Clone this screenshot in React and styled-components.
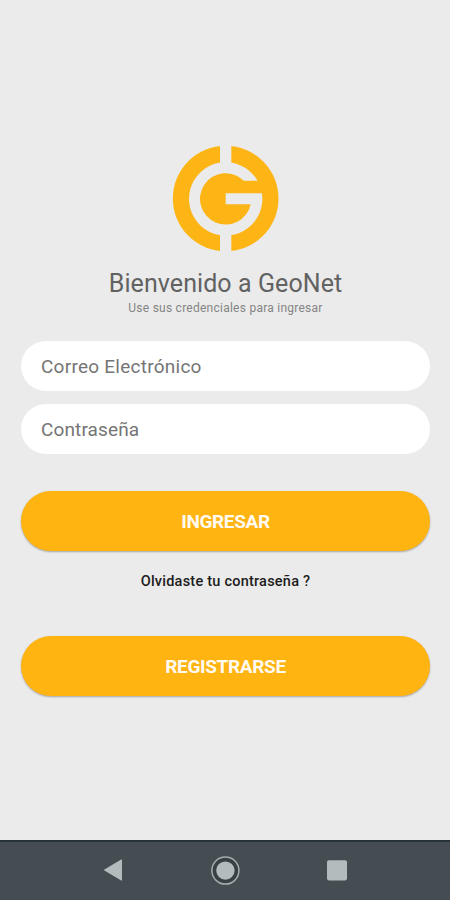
import React from 'react'
import styled, { createGlobalStyle } from 'styled-components'

export default function App() {
  return (
    <Screen>
      <GlobalStyle />
      <Content>
        <Logo />
        <Title>Bienvenido a GeoNet</Title>
        <SubTitle>Use sus credenciales para ingresar</SubTitle>
        <Form onSubmit={(e) => e.preventDefault()}>
          <Input type="text" placeholder="Correo Electrónico" $spacing="0.25px" />
          <Input type="password" placeholder="Contraseña" $spacing="0.12px" />
          <Button type="submit">Ingresar</Button>
          <ForgotLink type="button">Olvidaste tu contraseña ?</ForgotLink>
          <Button type="button">Registrarse</Button>
        </Form>
      </Content>
      <NavBar>
        <NavIcon viewBox="0 0 32 32">
          <path d="M7.4 14.6 L24.2 4.5 Q25 4.1 25 5 V25 Q25 26 24.2 25.5 L7.4 15.6 Q6.6 15.1 7.4 14.6 Z" fill="#b3bbbd" />
        </NavIcon>
        <NavIcon viewBox="0 0 32 32">
          <circle cx="16.4" cy="15.6" r="13.5" fill="#384045" stroke="#a5adaf" strokeWidth="1.5" />
          <circle cx="16.4" cy="15.6" r="9.2" fill="#b3bbbd" />
        </NavIcon>
        <NavIcon viewBox="0 0 32 32">
          <rect x="6" y="5.2" width="20" height="20.2" rx="1.8" fill="#b3bbbd" />
        </NavIcon>
      </NavBar>
    </Screen>
  )
}

function Logo() {
  return (
    <LogoSvg viewBox="0 0 360 375">
      <circle cx="182" cy="190.5" r="158.5" fill="#fdb515" />
      <path
        d="M277.5 137 A110 110 0 1 0 290.8 175 H182 V208 H257.2 A77 77 0 1 1 236.4 137 Z"
        fill="#ebebeb"
      />
      <path d="M165 28 H199 V86 H165 Z M165 298 H199 V354 H165 Z" fill="#ebebeb" />
    </LogoSvg>
  )
}

const GlobalStyle = createGlobalStyle`
  * {
    box-sizing: border-box;
  }

  body {
    margin: 0;
    background-color: #ebebeb;
    font-family: Roboto, sans-serif;
  }
`;

const Screen = styled.div`
  display: flex;
  flex-direction: column;
  height: 900px;
  width: 450px;
  overflow: hidden;
  background-color: #ebebeb;
`;

const Content = styled.main`
  display: flex;
  flex-direction: column;
  align-items: center;
  flex: 1;
  padding: 135px 20px 0 21px;
`;

const LogoSvg = styled.svg`
  width: 120px;
  height: 125px;
  flex-shrink: 0;
  margin-right: 1px;
`;

const Title = styled.h1`
  margin: 9px 0 0;
  font-size: 25px;
  font-weight: 400;
  line-height: 30px;
  letter-spacing: 0.08px;
  color: #626262;
`;

const SubTitle = styled.p`
  margin: 1px 0 0;
  font-size: 12px;
  line-height: 16px;
  letter-spacing: 0.25px;
  color: #858585;
`;

const Form = styled.form`
  display: flex;
  flex-direction: column;
  align-items: center;
  width: 100%;
  margin-top: 25px;
`;

const Input = styled.input`
  width: 100%;
  height: 50px;
  margin-bottom: 13px;
  padding: 0 20px;
  border: 0;
  outline: 0;
  border-radius: 25px;
  background-color: white;
  font-family: inherit;
  font-size: 19px;
  letter-spacing: ${({ $spacing }) => $spacing};
  color: #444;

  &::placeholder {
    color: #757575;
    opacity: 1;
  }
`;

const Button = styled.button`
  width: 100%;
  height: 60px;
  margin-top: 24px;
  border: 0;
  border-radius: 30px;
  background-color: #ffb412;
  box-shadow: 0 1px 2px rgba(0, 0, 0, 0.3);
  color: #fffaf0;
  font-family: inherit;
  font-size: 19px;
  font-weight: 700;
  letter-spacing: -0.35px;
  text-transform: uppercase;
  cursor: pointer;
`;

const ForgotLink = styled.button`
  margin: 21px 0 20px;
  padding: 0;
  border: 0;
  background: none;
  font-family: inherit;
  font-size: 14.5px;
  font-weight: 500;
  line-height: 20px;
  letter-spacing: 0.23px;
  color: #1c1c1c;
  cursor: pointer;
`;

const NavBar = styled.nav`
  display: flex;
  align-items: center;
  justify-content: center;
  gap: 80px;
  height: 60px;
  border-top: 2px solid #263238;
  background-color: #454d52;
`;

const NavIcon = styled.svg`
  width: 32px;
  height: 32px;
`;
